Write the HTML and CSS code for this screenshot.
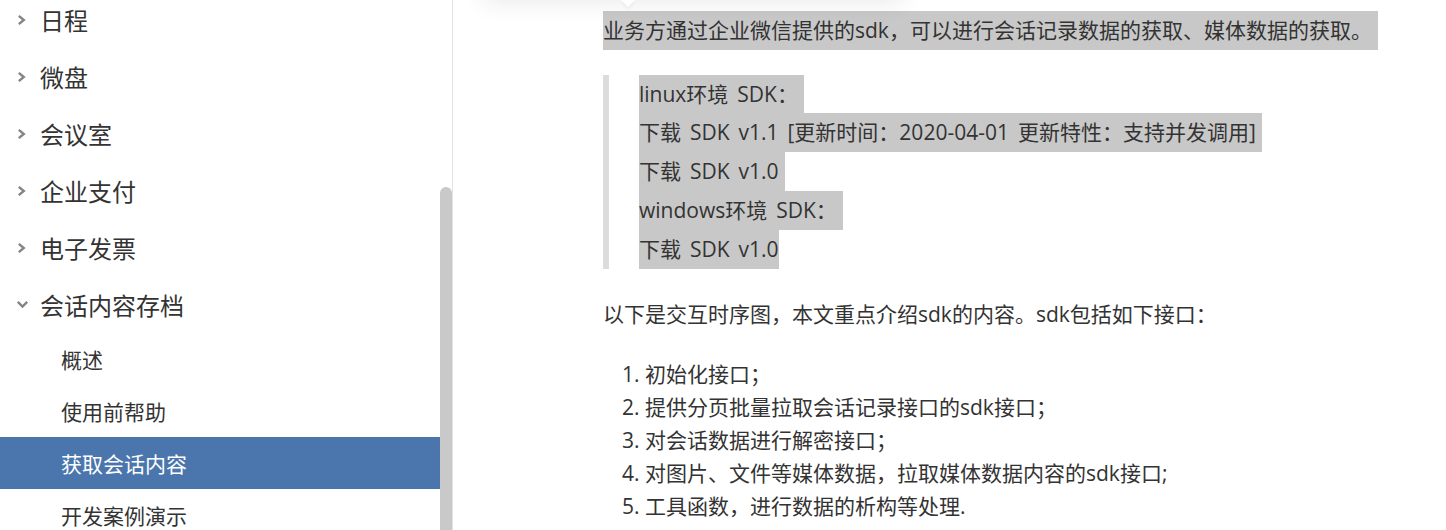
FILE: index.html
```html
<!DOCTYPE html>
<html lang="zh-CN">
<head>
<meta charset="utf-8">
<title>获取会话内容</title>
<link rel="stylesheet" href="styles.css">
</head>
<body>
<div class="page">
  <aside class="sidebar">
    <nav class="nav">
      <ul class="menu">
        <li class="item"><svg class="chev" width="9" height="12" viewBox="0 0 9 12"><path d="M1.8 1.8 L6.8 6 L1.8 10.2"/></svg><span>日程</span></li>
        <li class="item"><svg class="chev" width="9" height="12" viewBox="0 0 9 12"><path d="M1.8 1.8 L6.8 6 L1.8 10.2"/></svg><span>微盘</span></li>
        <li class="item"><svg class="chev" width="9" height="12" viewBox="0 0 9 12"><path d="M1.8 1.8 L6.8 6 L1.8 10.2"/></svg><span>会议室</span></li>
        <li class="item"><svg class="chev" width="9" height="12" viewBox="0 0 9 12"><path d="M1.8 1.8 L6.8 6 L1.8 10.2"/></svg><span>企业支付</span></li>
        <li class="item"><svg class="chev" width="9" height="12" viewBox="0 0 9 12"><path d="M1.8 1.8 L6.8 6 L1.8 10.2"/></svg><span>电子发票</span></li>
        <li class="item open"><svg class="chev down" width="13" height="9" viewBox="0 0 13 9"><path d="M1.8 1.8 L6.5 6.5 L11.2 1.8"/></svg><span>会话内容存档</span></li>
      </ul>
      <ul class="submenu">
        <li class="sub">概述</li>
        <li class="sub">使用前帮助</li>
        <li class="sub active">获取会话内容</li>
        <li class="sub">开发案例演示</li>
      </ul>
    </nav>
    <div class="track"><div class="thumb"></div></div>
  </aside>
  <main class="main">
    <div class="popup"><span class="popup-arrow"></span></div>
    <p class="para"><span class="sel tail">业务方通过企业微信提供的sdk，可以进行会话记录数据的获取、媒体数据的获取。</span></p>
    <blockquote class="quote">
      <div class="qline tail">linux环境 SDK：</div>
      <div class="qline tail">下载 SDK v1.1 [更新时间：2020-04-01 更新特性：支持并发调用]</div>
      <div class="qline tail">下载 SDK v1.0</div>
      <div class="qline tail">windows环境 SDK：</div>
      <div class="qline">下载 SDK v1.0</div>
    </blockquote>
    <p class="para">以下是交互时序图，本文重点介绍sdk的内容。sdk包括如下接口：</p>
    <ol class="list">
      <li>初始化接口；</li>
      <li>提供分页批量拉取会话记录接口的sdk接口；</li>
      <li>对会话数据进行解密接口；</li>
      <li>对图片、文件等媒体数据，拉取媒体数据内容的sdk接口;</li>
      <li>工具函数，进行数据的析构等处理.</li>
    </ol>
  </main>
</div>
</body>
</html>
```
FILE: styles.css
```css
* { box-sizing: border-box; }
html, body { margin: 0; padding: 0; background: #fff; }
body {
  font-family: "Open Sans", "Noto Sans CJK SC", sans-serif;
  color: #333;
  overflow: hidden;
  height: 530px;
}
.page {
  display: flex;
  height: 530px;
}
.sidebar {
  width: 453px;
  flex: none;
  display: flex;
  border-right: 1px solid #e2e2e2;
  overflow: hidden;
}
.nav {
  width: 440px;
  flex: none;
}
.menu, .submenu {
  list-style: none;
  margin: 0;
  padding: 0;
}
.menu { margin-top: -9px; }
.item {
  height: 57px;
  display: flex;
  align-items: center;
  font-size: 24px;
  color: #333;
}
.chev {
  fill: none;
  stroke: #858585;
  stroke-width: 2.4;
  stroke-linecap: butt;
  stroke-linejoin: miter;
  margin-left: 17px;
  margin-right: 14px;
  flex: none;
}
.chev.down {
  margin-left: 16px;
  margin-right: 11px;
}
.sub {
  height: 52px;
  display: flex;
  align-items: center;
  padding-left: 61px;
  font-size: 21px;
  color: #333;
}
.sub.active {
  background: #4a76ad;
  color: #fff;
}
.track {
  width: 12px;
  flex: none;
  padding-top: 187px;
}
.thumb {
  width: 12px;
  height: 400px;
  background: #c9c9c9;
  border-radius: 6px 6px 0 0;
}
.main {
  position: relative;
  flex: 1;
  padding: 11px 0 0 150px;
  font-size: 21px;
}
.popup {
  position: absolute;
  left: 30px;
  top: -60px;
  width: 420px;
  height: 60px;
  background: #fff;
  box-shadow: 0 2px 24px rgba(0, 0, 0, 0.09);
}
.popup-arrow {
  position: absolute;
  left: 140px;
  bottom: -5px;
  width: 10px;
  height: 10px;
  background: #fff;
  transform: rotate(45deg);
  box-shadow: 2px 2px 3px rgba(0, 0, 0, 0.04);
}
.para {
  margin: 0;
  line-height: 38.6px;
}
.sel {
  display: inline-block;
  background: #c8c8c8;
}
.tail { padding-right: 6px; }
.quote {
  margin: 25px 0 26px 0;
  border-left: 6px solid #dcdcdc;
  padding-left: 30px;
  word-spacing: 3.5px;
}
.qline {
  width: fit-content;
  line-height: 38.8px;
  background: #c8c8c8;
}
.list {
  margin: 25px 0 0 0;
  padding-left: 42px;
  line-height: 33px;
}
```
